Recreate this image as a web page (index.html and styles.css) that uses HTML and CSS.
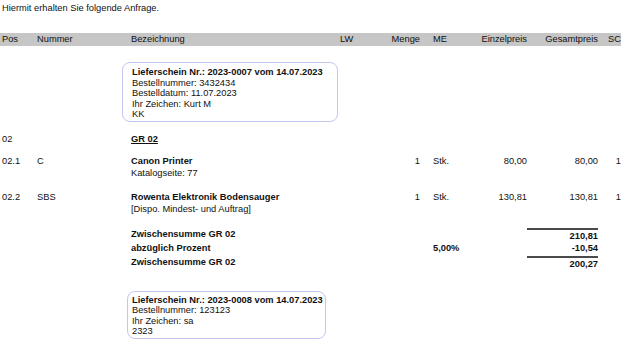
FILE: index.html
```html
<!DOCTYPE html>
<html lang="de">
<head>
  <meta charset="UTF-8" />
  <title>Anfrage</title>
  <link rel="stylesheet" href="styles.css">
</head>
<body>
  <div class="page">
    <p class="intro">Hiermit erhalten Sie folgende Anfrage.</p>

    <div class="row head">
      <div>Pos</div>
      <div>Nummer</div>
      <div>Bezeichnung</div>
      <div>LW</div>
      <div class="num">Menge</div>
      <div class="me">ME</div>
      <div class="num">Einzelpreis</div>
      <div class="num">Gesamtpreis</div>
      <div class="num">SC</div>
    </div>

    <!-- Lieferschein 2023-0007 -->
    <div class="row box-row first">
      <div class="bez">
        <div class="ls-box ls-wide">
          <div class="b">Lieferschein Nr.: 2023-0007 vom 14.07.2023</div>
          <div>Bestellnummer: 3432434</div>
          <div>Bestelldatum: 11.07.2023</div>
          <div>Ihr Zeichen: Kurt M</div>
          <div>KK</div>
        </div>
      </div>
    </div>

    <div class="row group">
      <div>02</div>
      <div></div>
      <div class="b u">GR 02</div>
    </div>

    <div class="row item item-1">
      <div>02.1</div>
      <div>C</div>
      <div>
        <div class="b">Canon Printer</div>
        <div>Katalogseite: 77</div>
      </div>
      <div></div>
      <div class="num">1</div>
      <div class="me">Stk.</div>
      <div class="num">80,00</div>
      <div class="num">80,00</div>
      <div class="num">1</div>
    </div>

    <div class="row item">
      <div>02.2</div>
      <div>SBS</div>
      <div>
        <div class="b">Rowenta Elektronik Bodensauger</div>
        <div>[Dispo. Mindest- und Auftrag]</div>
      </div>
      <div></div>
      <div class="num">1</div>
      <div class="me">Stk.</div>
      <div class="num">130,81</div>
      <div class="num">130,81</div>
      <div class="num">1</div>
    </div>

    <div class="totals">
      <div class="row sum">
        <div></div><div></div>
        <div class="b">Zwischensumme GR 02</div>
        <div></div><div></div><div></div><div></div>
        <div class="num b">210,81</div>
      </div>
      <div class="row">
        <div></div><div></div>
        <div class="b">abzüglich Prozent</div>
        <div></div><div></div>
        <div class="me b">5,00%</div>
        <div></div>
        <div class="num b">-10,54</div>
      </div>
      <div class="row sum sum-end">
        <div></div><div></div>
        <div class="b">Zwischensumme GR 02</div>
        <div></div><div></div><div></div><div></div>
        <div class="num b">200,27</div>
      </div>
    </div>

    <!-- Lieferschein 2023-0008 -->
    <div class="row box-row second">
      <div class="bez">
        <div class="ls-box ls-narrow">
          <div class="b">Lieferschein Nr.: 2023-0008 vom 14.07.2023</div>
          <div>Bestellnummer: 123123</div>
          <div>Ihr Zeichen: sa</div>
          <div>2323</div>
        </div>
      </div>
    </div>
  </div>
</body>
</html>
```

FILE: styles.css
```css
* {
  box-sizing: border-box;
}

body {
  margin: 0;
  background: #ffffff;
  color: #111111;
  font-family: "Liberation Sans", Arial, sans-serif;
  font-size: 9.3px;
}

.page {
  width: 621px;
}

.intro {
  margin: 0;
  padding: 2px 0 0 2px;
  line-height: 12px;
}

/* shared column layout for header, positions and totals */
.row {
  display: grid;
  grid-template-columns: 35px 94px 209px 39px 41px 60px 47px 71px 23px;
  padding-left: 2px;
  line-height: 12px;
}

.head {
  margin-top: 19px;
  height: 13px;
  line-height: 13px;
  background: #c6c6c6;
}

.num {
  text-align: right;
}

.me {
  padding-left: 13px;
}

.b {
  font-weight: bold;
}

.u {
  text-decoration: underline;
}

.bez {
  grid-column: 3;
}

.ls-box {
  border: 1px solid #c4c6f2;
  border-radius: 8px;
  line-height: 10.5px;
}

.ls-wide {
  width: 216px;
  margin-left: -9px;
  padding: 4px 0 1px 9px;
}

.ls-narrow {
  width: 199px;
  margin-left: -4px;
  padding: 3px 0 1px 4px;
}

.box-row.first {
  margin-top: 16px;
}

.box-row.second {
  margin-top: 21px;
}

.group {
  margin-top: 11px;
}

.item {
  margin-top: 12px;
}

.item-1 {
  margin-top: 10px;
}

.totals {
  margin-top: 13px;
}

.sum > .num {
  border-top: 2px solid #4a4a4a;
}

.sum-end {
  margin-top: 2px;
}
```
